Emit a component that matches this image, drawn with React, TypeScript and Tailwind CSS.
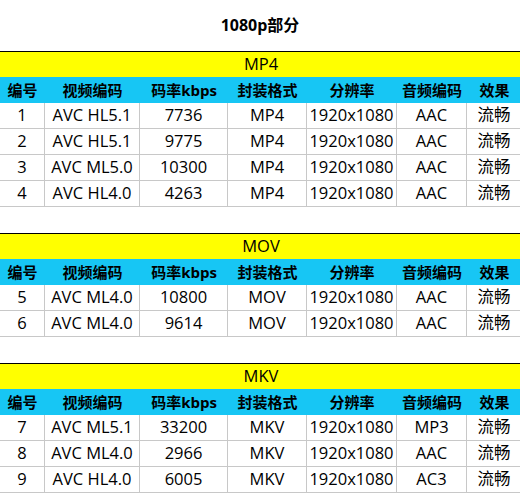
const cols = "grid grid-cols-[45px_95px_88px_79px_90px_70px_55px]"

const headers = ["编号", "视频编码", "码率kbps", "封装格式", "分辨率", "音频编码", "效果"]

type Row = string[]

const sections: { title: string; rows: Row[] }[] = [
  {
    title: "MP4",
    rows: [
      ["1", "AVC HL5.1", "7736", "MP4", "1920x1080", "AAC", "流畅"],
      ["2", "AVC HL5.1", "9775", "MP4", "1920x1080", "AAC", "流畅"],
      ["3", "AVC ML5.0", "10300", "MP4", "1920x1080", "AAC", "流畅"],
      ["4", "AVC HL4.0", "4263", "MP4", "1920x1080", "AAC", "流畅"],
    ],
  },
  {
    title: "MOV",
    rows: [
      ["5", "AVC ML4.0", "10800", "MOV", "1920x1080", "AAC", "流畅"],
      ["6", "AVC ML4.0", "9614", "MOV", "1920x1080", "AAC", "流畅"],
    ],
  },
  {
    title: "MKV",
    rows: [
      ["7", "AVC ML5.1", "33200", "MKV", "1920x1080", "MP3", "流畅"],
      ["8", "AVC ML4.0", "2966", "MKV", "1920x1080", "AAC", "流畅"],
      ["9", "AVC HL4.0", "6005", "MKV", "1920x1080", "AC3", "流畅"],
    ],
  },
]

function Section({ title, rows }: { title: string; rows: Row[] }) {
  return (
    <div className="w-[522px]">
      <div className="flex h-[26px] items-center justify-center border-t border-black bg-[#ffff00] text-[16.5px] text-black">
        {title}
      </div>
      <div className={`${cols} h-[26px] bg-[#17c6f4]`}>
        {headers.map((h) => (
          <div key={h} className="flex items-center justify-center text-[15px] font-bold text-black">
            {h}
          </div>
        ))}
      </div>
      {rows.map((r, i) => (
        <div key={i} className={`${cols} h-[26px]`}>
          {r.map((c, j) => (
            <div
              key={j}
              className="flex items-center justify-center border-r border-b border-[#c8c8c8] text-[16.5px] text-black"
            >
              {c}
            </div>
          ))}
        </div>
      ))}
    </div>
  )
}

export default function App() {
  return (
    <div
      className="h-[493px] w-[520px] overflow-hidden bg-white"
      style={{ fontFamily: '"Open Sans", "Noto Sans CJK SC", sans-serif' }}
    >
      <div className="flex h-[51px] items-center justify-center pb-[1px] text-[16px] font-bold text-black">
        1080p部分
      </div>
      <div className="flex flex-col gap-[26px]">
        {sections.map((s) => (
          <Section key={s.title} title={s.title} rows={s.rows} />
        ))}
      </div>
    </div>
  )
}
